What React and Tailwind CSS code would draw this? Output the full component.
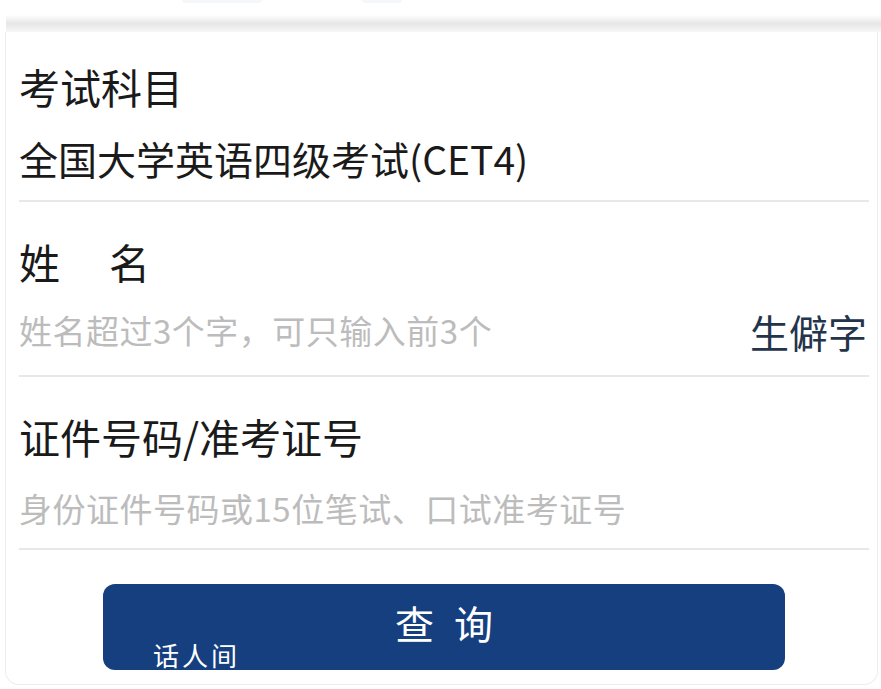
const font = { fontFamily: '"Noto Sans CJK SC", "Noto Sans", sans-serif' };

const Divider = () => <div className="h-[2px] bg-[#e8e8e8] mr-[8px]" />;

export default function App() {
  return (
    <div className="w-[881px] h-[689px] bg-white overflow-hidden" style={font}>
      <div className="h-[32px] flex flex-col">
        <div className="h-[4px] flex">
          <div className="ml-[182px] w-[80px] h-[3px] bg-[#f4f8fa] rounded-b" />
          <div className="ml-[100px] w-[40px] h-[3px] bg-[#f4f8fa] rounded-b" />
        </div>
        <div className="h-[11px]" />
        <div className="flex-1 ml-[6px] bg-gradient-to-b from-white via-[#e6e6e6] to-[#f7f7f7]" />
      </div>
      <div className="ml-[5px] mr-[3px] border-l border-r border-b border-[#ededed] rounded-b-[14px] pl-[13px] pb-[14px] text-[#1a1a1a]">
        <div className="pt-[29px] text-[41px] leading-[50px]">考试科目</div>
        <div className="mt-[22px] text-[39px] leading-[50px] mb-[17px]">全国大学英语四级考试(CET4)</div>
        <Divider />

        <div className="pt-[34px] text-[41px] leading-[50px] flex gap-[49px]">
          <span>姓</span>
          <span>名</span>
        </div>
        <div className="mt-[20px] h-[50px] flex items-center justify-between mr-[10px] mb-[19px]">
          <span className="text-[33px] text-[#bcbcbc] tracking-[0.5px]">姓名超过3个字，可只输入前3个</span>
          <span className="text-[39px] text-[#24344a]">生僻字</span>
        </div>
        <Divider />

        <div className="pt-[34px] text-[41px] leading-[50px]">证件号码/准考证号</div>
        <div className="mt-[22px] text-[33px] leading-[50px] text-[#bcbcbc] tracking-[0.5px] mb-[15px]">身份证件号码或15位笔试、口试准考证号</div>
        <Divider />

        <button className="relative mt-[34px] ml-[84px] w-[682px] h-[86px] rounded-[12px] bg-[#163f80] text-white flex items-start justify-center pt-[13px]">
          <span className="flex gap-[20px] text-[39px] leading-[50px]">
            <span>查</span>
            <span>询</span>
          </span>
          <span className="absolute left-[50px] top-[55px] text-[26px] leading-[32px] tracking-[3px]">话人间</span>
        </button>
      </div>
    </div>
  );
}
